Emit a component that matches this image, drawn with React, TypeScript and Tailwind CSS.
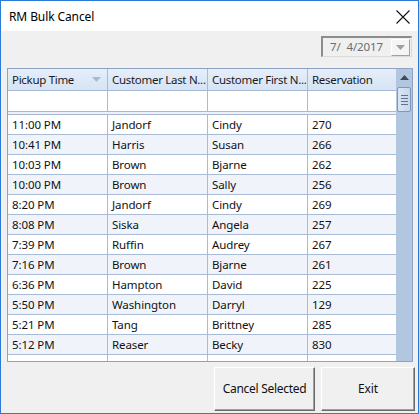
const rows: [string, string, string, string][] = [
  ['11:00 PM', 'Jandorf', 'Cindy', '270'],
  ['10:41 PM', 'Harris', 'Susan', '266'],
  ['10:03 PM', 'Brown', 'Bjarne', '262'],
  ['10:00 PM', 'Brown', 'Sally', '256'],
  ['8:20 PM', 'Jandorf', 'Cindy', '269'],
  ['8:08 PM', 'Siska', 'Angela', '257'],
  ['7:39 PM', 'Ruffin', 'Audrey', '267'],
  ['7:16 PM', 'Brown', 'Bjarne', '261'],
  ['6:36 PM', 'Hampton', 'David', '225'],
  ['5:50 PM', 'Washington', 'Darryl', '129'],
  ['5:21 PM', 'Tang', 'Brittney', '285'],
  ['5:12 PM', 'Reaser', 'Becky', '830'],
  ['', '', '', ''],
];

const colW = ['w-[100px]', 'w-[100px]', 'w-[100px]', 'w-[87px]'];

export default function App(): JSX.Element {
  return (
    <div className="w-[419px] h-[414px] border border-[#2b79d8] bg-[#f0f0f0] flex flex-col font-['Segoe_UI','Noto_Sans',sans-serif] text-[11.5px] tracking-[-0.1px] text-[#111] overflow-hidden">
      {/* title bar */}
      <div className="h-[30px] bg-white flex items-center justify-between pl-[8px] pr-[6px] pt-[2px] shrink-0">
        <span className="text-[12px] text-black">RM Bulk Cancel</span>
        <svg width="16" height="16" viewBox="0 0 16 16" className="mr-[1px]">
          <path d="M1.5 1.5 L14.5 14.5 M14.5 1.5 L1.5 14.5" stroke="#111" strokeWidth="1.1" fill="none" />
        </svg>
      </div>

      {/* date picker */}
      <div className="flex justify-end pr-[6px] pt-[5px] shrink-0">
        <div className="w-[91px] h-[21px] border-t-2 border-l-2 border-[#8c8c8c] border-r border-b border-r-[#dadada] border-b-[#dadada] bg-[#f0f0f0] flex items-center justify-between">
          <span className="pl-[7px] text-[#6d6d6d] whitespace-pre">7/  4/2017</span>
          <div className="w-[19px] h-[17px] mr-[1px] bg-[#f5f5f5] border border-t-white border-l-white border-r-[#a0a0a0] border-b-[#a0a0a0] flex items-center justify-center">
            <svg width="9" height="5" viewBox="0 0 9 5">
              <path d="M0 0 H9 L4.5 5 Z" fill="#a0a0a0" />
            </svg>
          </div>
        </div>
      </div>

      {/* grid */}
      <div className="ml-[6px] mt-[11px] w-[406px] h-[294px] border border-[#8da3c3] bg-white flex overflow-hidden shrink-0">
        <div className="flex-1 flex flex-col">
          {/* header */}
          <div className="h-[22px] flex border-b border-[#a5b9d5] bg-gradient-to-b from-[#e6eefa] to-[#d6e4f4] shrink-0">
            {['Pickup Time', 'Customer Last N...', 'Customer First N...', 'Reservation'].map((h, i) => (
              <div
                key={h}
                className={`${colW[i]} ${i < 3 ? 'border-r border-[#a9bcd7]' : ''} flex items-center justify-between pl-[4px] pr-[6px] whitespace-nowrap overflow-hidden text-[#1a1a1a] tracking-[-0.3px]`}
              >
                <span>{h}</span>
                {i === 0 && (
                  <svg width="9" height="5" viewBox="0 0 9 5">
                    <path d="M0 0 H9 L4.5 5 Z" fill="#a3bbda" />
                  </svg>
                )}
              </div>
            ))}
          </div>
          {/* filter row */}
          <div className="h-[21px] flex border-b border-[#a5b9d5] bg-white shrink-0">
            {colW.map((w, i) => (
              <div key={i} className={`${w} ${i < 3 ? 'border-r border-[#a9bcd7]' : ''}`} />
            ))}
          </div>
          <div className="h-[3px] bg-[#eef2f8] border-b border-[#a5b9d5] shrink-0" />
          {/* data */}
          {rows.map((r, idx) => (
            <div
              key={idx}
              className={`h-[20px] flex border-b border-[#a9bcd7] shrink-0 ${idx % 2 === 1 ? 'bg-[#f0f4fa]' : 'bg-white'}`}
            >
              {r.map((c, i) => (
                <div
                  key={i}
                  className={`${colW[i]} ${i < 3 ? 'border-r border-[#a9bcd7]' : ''} flex items-center pl-[4px] whitespace-nowrap overflow-hidden`}
                >
                  {c}
                </div>
              ))}
            </div>
          ))}
        </div>
        {/* scrollbar */}
        <div className="w-[16px] bg-[#b3c6df] flex flex-col items-center shrink-0">
          <div className="h-[16px] flex items-center justify-center">
            <svg width="9" height="5" viewBox="0 0 9 5">
              <path d="M0 5 H9 L4.5 0 Z" fill="#3e4a5c" />
            </svg>
          </div>
          <div className="mt-[2px] w-[14px] h-[25px] rounded-[2px] border border-[#7f97b8] bg-gradient-to-r from-[#dbe6f3] to-[#c6d6ea] flex flex-col items-center justify-center gap-[2px]">
            <div className="w-[7px] h-px bg-[#5f7391]" />
            <div className="w-[7px] h-px bg-[#5f7391]" />
            <div className="w-[7px] h-px bg-[#5f7391]" />
            <div className="w-[7px] h-px bg-[#5f7391]" />
          </div>
        </div>
      </div>

      {/* buttons */}
      <div className="flex justify-end gap-[6px] pr-[3px] mt-[5px] shrink-0">
        <button className="w-[101px] h-[44px] bg-[#f0f0f0] border border-t-white border-l-white border-r-[#696969] border-b-[#696969] shadow-[inset_-1px_-1px_0_#a0a0a0] text-[12px] tracking-[-0.3px] text-[#111]">
          Cancel Selected
        </button>
        <button className="w-[94px] h-[44px] bg-[#f0f0f0] border border-t-white border-l-white border-r-[#696969] border-b-[#696969] shadow-[inset_-1px_-1px_0_#a0a0a0] text-[12px] text-[#111]">
          Exit
        </button>
      </div>
    </div>
  );
}
